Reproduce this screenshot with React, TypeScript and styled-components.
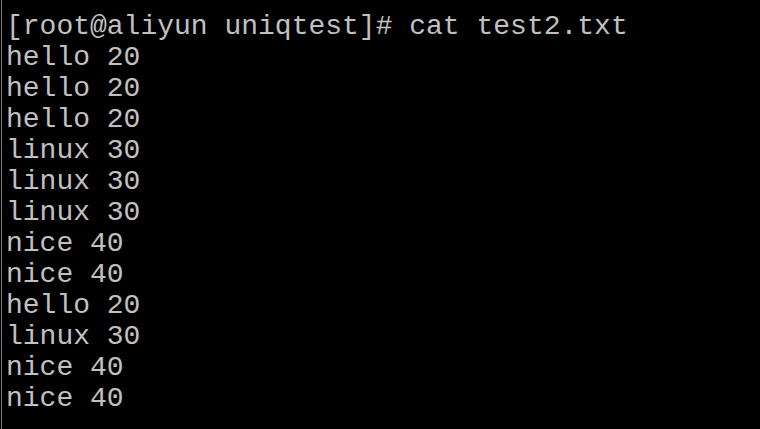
import React from "react";
import styled, { createGlobalStyle } from "styled-components";

const Global = createGlobalStyle`
  html, body { margin: 0; padding: 0; background: #000; }
  body { width: 760px; height: 429px; overflow: hidden; }
`;

const Terminal = styled.div`
  width: 760px;
  height: 429px;
  box-sizing: border-box;
  background: #000;
  border-left: 1px solid #7a7a7a;
  margin-left: 1px;
  padding: 11px 0 0 4px;
  display: flex;
  flex-direction: column;
  font-family: "Liberation Mono", "Courier New", monospace;
  font-size: 28px;
  line-height: 31px;
  color: #c0c0c0;
  white-space: pre;
`;

const Line = styled.div`
  height: 31px;
`;

const lines = [
  "[root@aliyun uniqtest]# cat test2.txt",
  "hello 20",
  "hello 20",
  "hello 20",
  "linux 30",
  "linux 30",
  "linux 30",
  "nice 40",
  "nice 40",
  "hello 20",
  "linux 30",
  "nice 40",
  "nice 40",
];

export default function App() {
  return (
    <>
      <Global />
      <Terminal>
        {lines.map((l, i) => (
          <Line key={i}>{l}</Line>
        ))}
      </Terminal>
    </>
  );
}
